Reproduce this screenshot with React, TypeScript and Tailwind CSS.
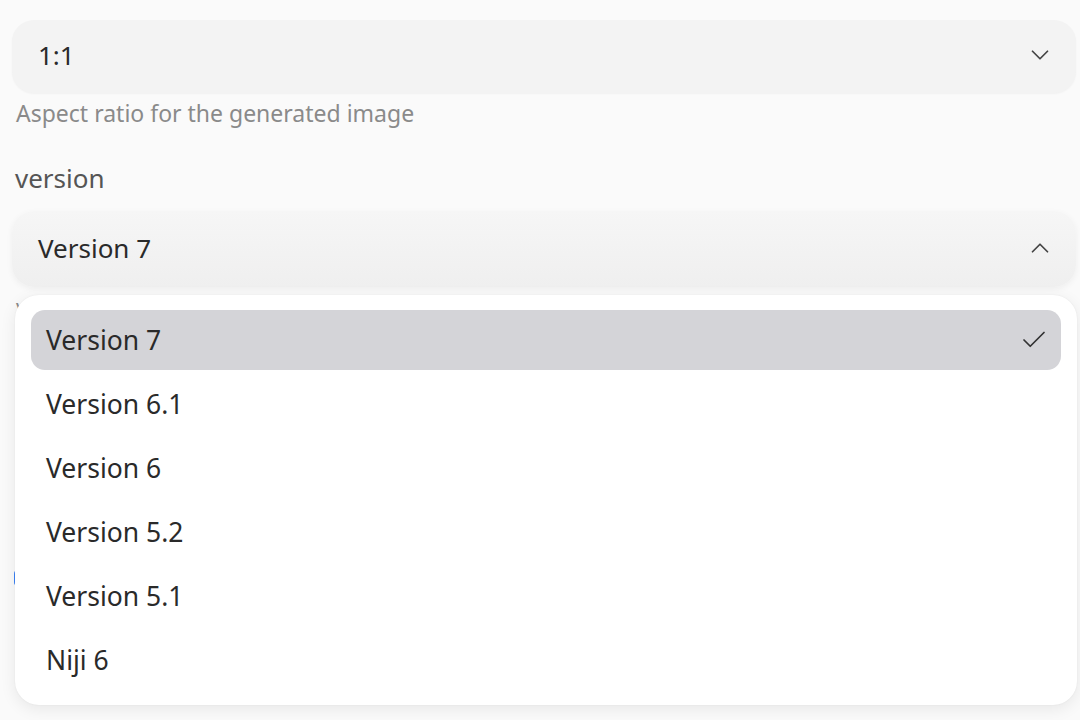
import { ChevronDown, ChevronUp, Check } from "lucide-react";

const versions = ["Version 7", "Version 6.1", "Version 6", "Version 5.2", "Version 5.1", "Niji 6"];

export default function App() {
  return (
    <div
      className="min-h-[720px] w-full bg-[#fafafa] pl-[12px] pr-[4px] pt-[20px] text-[#2a2a2a] overflow-hidden"
      style={{ fontFamily: '"Noto Sans", "Open Sans", sans-serif' }}
    >
      {/* aspect ratio */}
      <div className="flex h-[73px] items-center justify-between rounded-[22px] bg-[#f3f3f3] pb-[4px] pl-[26px] pr-[21px] shadow-[0_1px_2px_rgba(0,0,0,0.04)]">
        <span className="text-[26px] leading-none">1:1</span>
        <ChevronDown className="h-[30px] w-[30px] text-[#444]" strokeWidth={1.4} />
      </div>
      <p className="mt-[7px] pl-[4px] text-[23px] leading-[26px] text-[#8a8a8a]">
        Aspect ratio for the generated image
      </p>

      {/* version */}
      <p className="mt-[37px] pl-[3px] text-[26px] leading-[30px] text-[#555]">version</p>
      <div className="relative mt-[18px]">
        <div className="flex h-[76px] items-center justify-between rounded-[22px] bg-gradient-to-b from-[#f6f6f6] to-[#efefef] pb-[2px] pl-[26px] pr-[21px] shadow-[0_2px_6px_rgba(0,0,0,0.05)]">
          <span className="text-[26px] leading-none">Version 7</span>
          <ChevronUp className="h-[30px] w-[30px] text-[#444]" strokeWidth={1.4} />
        </div>
        <p className="mt-[8px] pl-[4px] text-[20px] text-[#8a8a8a]">Version</p>
        <div className="ml-[2px] mt-[245px] h-[16px] w-[16px] rounded-[4px] bg-[#3b82f6]" />

        {/* dropdown */}
        <div className="absolute left-[3px] right-[-1px] top-[84px] flex flex-col gap-[4px] rounded-[24px] bg-white px-[16px] pb-[15px] pt-[15px] shadow-[0_4px_16px_rgba(0,0,0,0.08),0_0_2px_rgba(0,0,0,0.06)]">
          {versions.map((v, i) => (
            <div
              key={v}
              className={
                i === 0
                  ? "flex h-[60px] items-center justify-between rounded-[14px] bg-[#d4d4d8] pl-[15px] pr-[12px]"
                  : "flex h-[60px] items-center justify-between rounded-[14px] pl-[15px] pr-[12px]"
              }
            >
              <span className="text-[26.5px] leading-none text-[#2a2a2a]">{v}</span>
              {i === 0 && <Check className="h-[30px] w-[30px] text-[#333]" strokeWidth={1.4} />}
            </div>
          ))}
        </div>
      </div>
    </div>
  );
}
